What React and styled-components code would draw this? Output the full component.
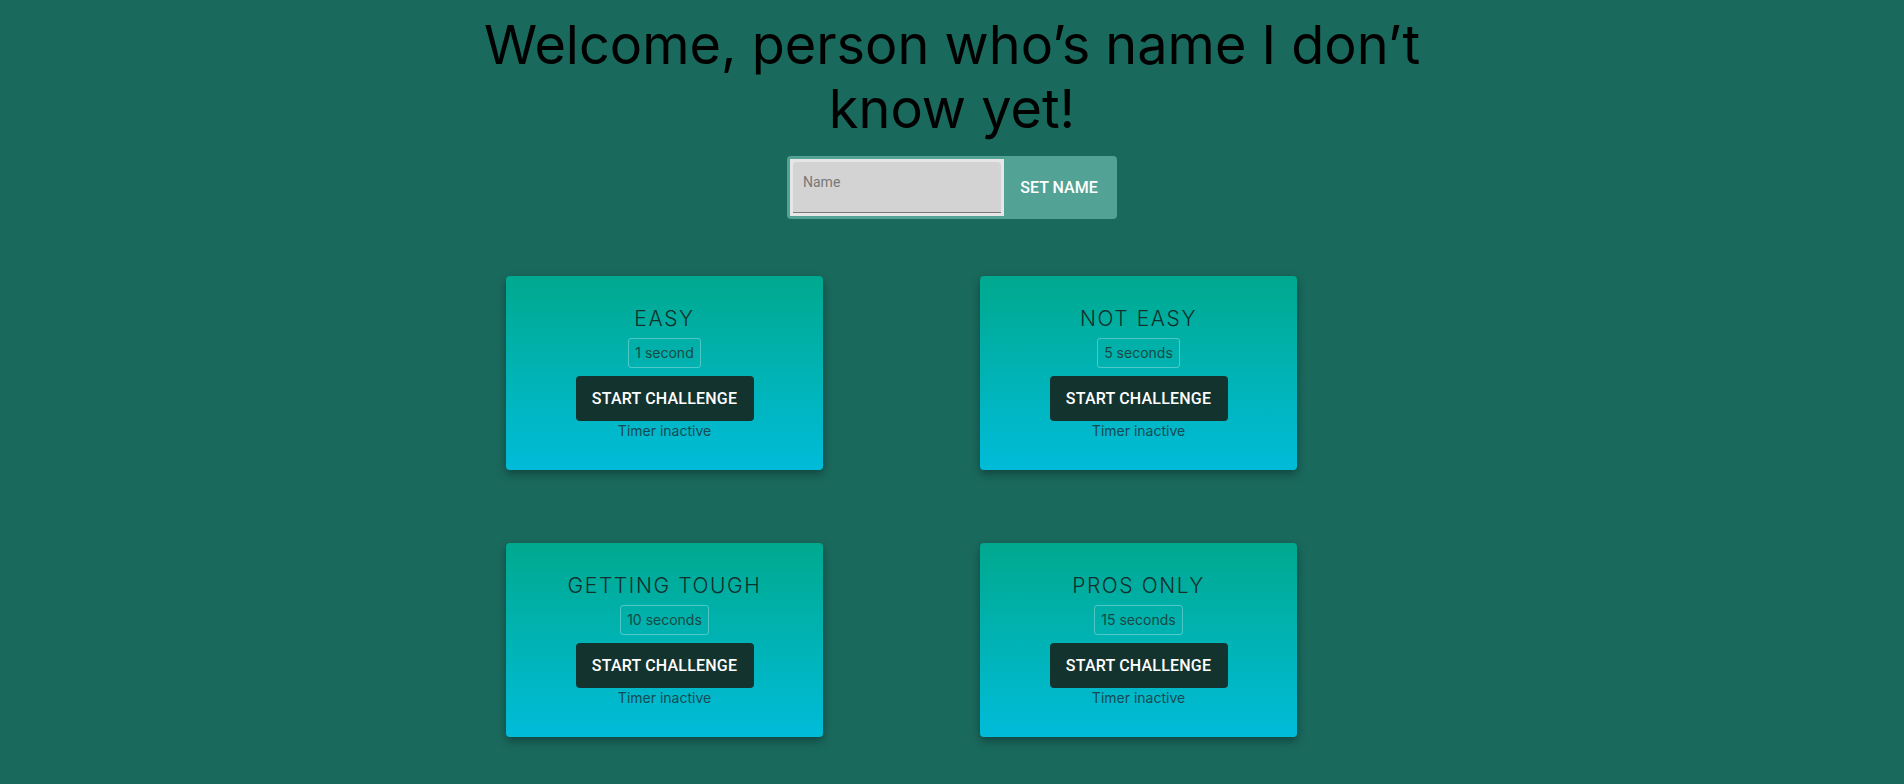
import React, { useState } from "react";
import styled, { createGlobalStyle } from "styled-components";

const GlobalStyle = createGlobalStyle`
  html, body {
    margin: 0;
    padding: 0;
    background: #1a695d;
    font-family: "Inter", "Open Sans", sans-serif;
  }
`;

const challenges = [
  { id: 1, title: "Easy", time: "1 second" },
  { id: 2, title: "Not Easy", time: "5 seconds" },
  { id: 3, title: "Getting Tough", time: "10 seconds" },
  { id: 4, title: "Pros Only", time: "15 seconds" },
];

const App = () => {
  const [name, setName] = useState("");

  return (
    <Page>
      <GlobalStyle />
      <Title>Welcome, person who’s name I don’t know yet!</Title>
      <NameForm onSubmit={(e) => e.preventDefault()}>
        <InputFrame>
          <NameInput
            placeholder='Name'
            value={name}
            onChange={(e) => setName(e.target.value)}
          />
        </InputFrame>
        <SetButton type='submit'>Set Name</SetButton>
      </NameForm>

      <Grid>
        {challenges.map((c) => (
          <Card key={c.id}>
            <CardTitle>{c.title}</CardTitle>
            <TimeBadge>{c.time}</TimeBadge>
            <StartButton>Start Challenge</StartButton>
            <Status>Timer inactive</Status>
          </Card>
        ))}
      </Grid>
    </Page>
  );
};

export default App;

const Page = styled.div`
  display: flex;
  flex-direction: column;
  align-items: center;
  min-height: 784px;
  padding-top: 13px;
  box-sizing: border-box;
`;

const Title = styled.h1`
  margin: 0;
  width: 980px;
  text-align: center;
  font-size: 54px;
  line-height: 64px;
  font-weight: 400;
  color: #000;
`;

const NameForm = styled.form`
  display: flex;
  align-items: stretch;
  margin-top: 15px;
  width: 330px;
  height: 63px;
  padding: 3px;
  box-sizing: border-box;
  background: #52a396;
  border-radius: 4px;
`;

const InputFrame = styled.div`
  width: 214px;
  padding: 3px;
  box-sizing: border-box;
  background: #e6e6e6;
`;

const NameInput = styled.input`
  width: 100%;
  height: 100%;
  box-sizing: border-box;
  border: none;
  border-bottom: 1px solid #7a7a7a;
  border-radius: 4px 4px 0 0;
  background: #d3d3d3;
  padding: 0 10px 10px;
  font-family: "Roboto", sans-serif;
  font-size: 14px;
  color: #333;
  outline: none;

  &::placeholder {
    color: #777;
  }
`;

const SetButton = styled.button`
  flex: 1;
  border: none;
  background: transparent;
  color: #fff;
  font-family: "Roboto", sans-serif;
  font-size: 16px;
  font-weight: 500;
  text-transform: uppercase;
  cursor: pointer;
`;

const Grid = styled.div`
  display: grid;
  grid-template-columns: 317px 317px;
  column-gap: 157px;
  row-gap: 73px;
  width: 892px;
  margin-top: 57px;
`;

const Card = styled.div`
  display: flex;
  flex-direction: column;
  align-items: center;
  height: 194px;
  box-sizing: border-box;
  padding-top: 29px;
  border-radius: 4px;
  background: linear-gradient(180deg, #00a98e 0%, #00bcd9 100%);
  box-shadow: 0 4px 10px rgba(0, 0, 0, 0.35);
`;

const CardTitle = styled.h2`
  margin: 0;
  font-size: 21px;
  line-height: 28px;
  font-weight: 300;
  letter-spacing: 1.6px;
  text-transform: uppercase;
  color: #12302d;
`;

const TimeBadge = styled.span`
  margin-top: 5px;
  padding: 0 6px;
  height: 30px;
  line-height: 28px;
  box-sizing: border-box;
  border: 1px solid rgba(255, 255, 255, 0.3);
  border-radius: 3px;
  font-size: 14px;
  color: #174a45;
`;

const StartButton = styled.button`
  margin-top: 8px;
  width: 178px;
  height: 45px;
  border: none;
  border-radius: 4px;
  background: #13332f;
  color: #fff;
  font-family: "Roboto", sans-serif;
  font-size: 16px;
  font-weight: 500;
  letter-spacing: 0.2px;
  text-transform: uppercase;
  cursor: pointer;
`;

const Status = styled.p`
  margin: 0;
  font-size: 14px;
  line-height: 20px;
  color: #164a52;
`;
